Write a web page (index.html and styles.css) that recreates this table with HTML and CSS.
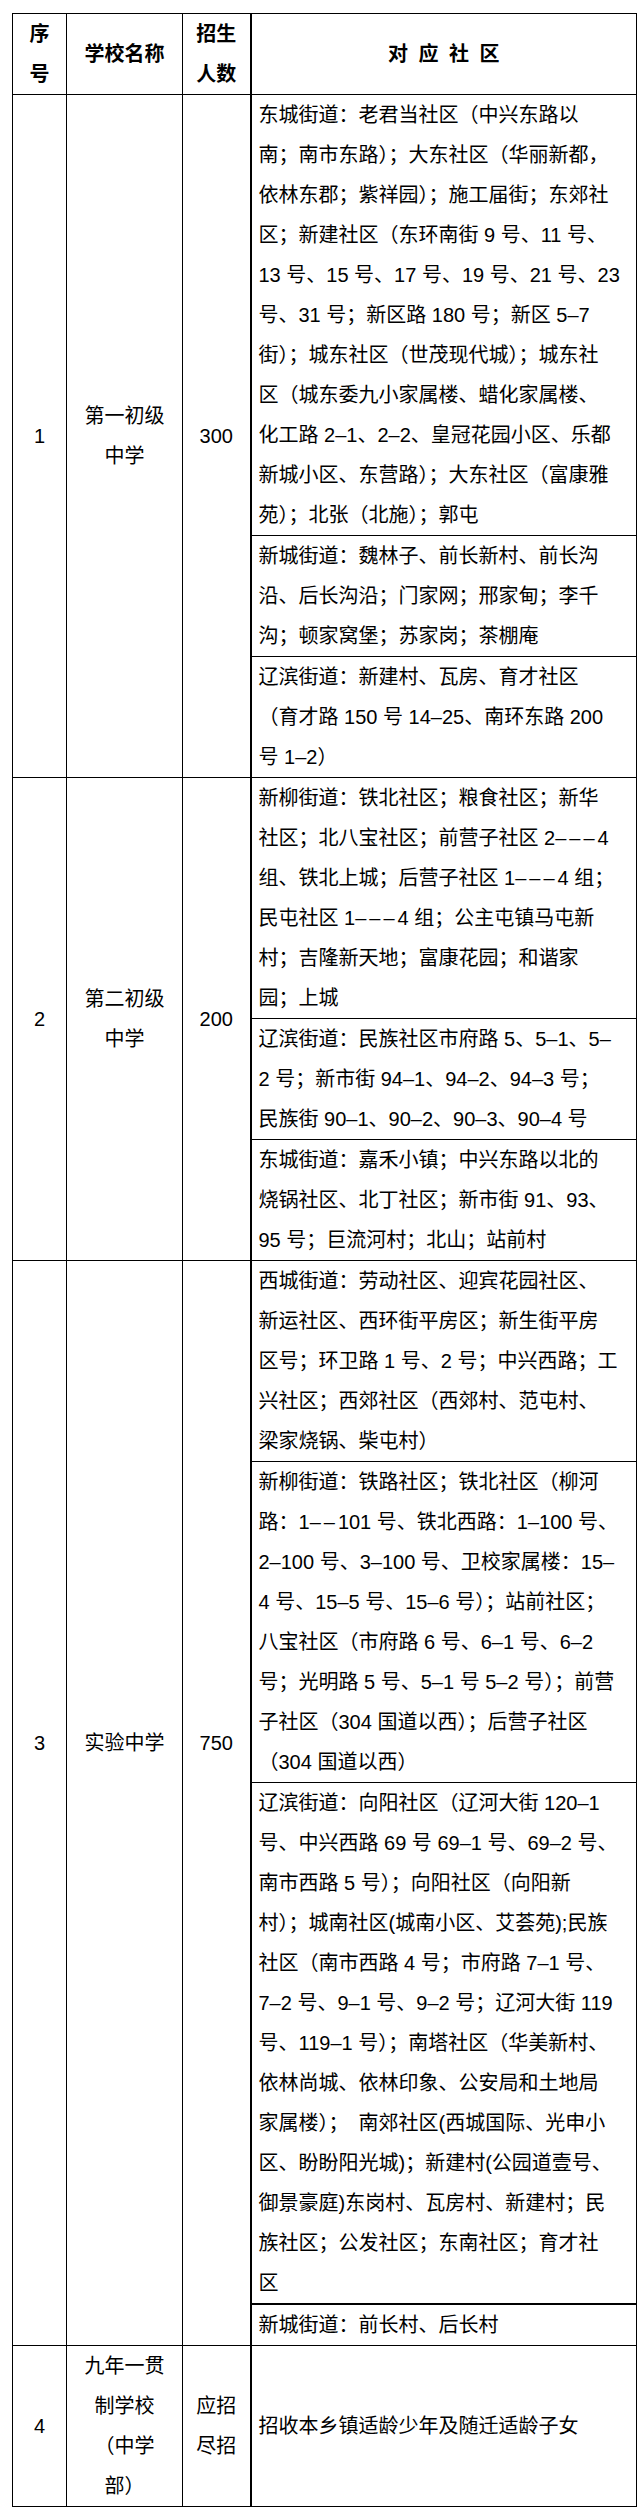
FILE: index.html
```html
<!DOCTYPE html>
<html lang="zh-CN">
<head>
<meta charset="utf-8">
<title>初中招生对应社区</title>
<link rel="stylesheet" href="styles.css">
</head>
<body>
<table class="roster">
  <colgroup>
    <col class="c-no">
    <col class="c-name">
    <col class="c-count">
    <col class="c-area">
  </colgroup>
  <thead>
    <tr>
      <th>序<br>号</th>
      <th>学校名称</th>
      <th>招生<br>人数</th>
      <th class="split spaced">对 应 社 区</th>
    </tr>
  </thead>
  <tbody>
    <tr>
      <td rowspan="3">1</td>
      <td rowspan="3">第一初级<br>中学</td>
      <td rowspan="3">300</td>
      <td class="split area">东城街道：老君当社区（中兴东路以<br>南；南市东路）；大东社区（华丽新都，<br>依林东郡；紫祥园）；施工届街；东郊社<br>区；新建社区（东环南街 9 号、11 号、<br>13 号、15 号、17 号、19 号、21 号、23<br>号、31 号；新区路 180 号；新区 5–7<br>街）；城东社区（世茂现代城）；城东社<br>区（城东委九小家属楼、蜡化家属楼、<br>化工路 2–1、2–2、皇冠花园小区、乐都<br>新城小区、东营路）；大东社区（富康雅<br>苑）；北张（北施）；郭屯</td>
    </tr>
    <tr>
      <td class="split area">新城街道：魏林子、前长新村、前长沟<br>沿、后长沟沿；门家网；邢家甸；李千<br>沟；顿家窝堡；苏家岗；茶棚庵</td>
    </tr>
    <tr>
      <td class="split area">辽滨街道：新建村、瓦房、育才社区<br>（育才路 150 号 14–25、南环东路 200<br>号 1–2）</td>
    </tr>
    <tr>
      <td rowspan="3">2</td>
      <td rowspan="3">第二初级<br>中学</td>
      <td rowspan="3">200</td>
      <td class="split area">新柳街道：铁北社区；粮食社区；新华<br>社区；北八宝社区；前营子社区 2<span class="dashes">–––</span>4<br>组、铁北上城；后营子社区 1<span class="dashes">–––</span>4 组；<br>民屯社区 1<span class="dashes">–––</span>4 组；公主屯镇马屯新<br>村；吉隆新天地；富康花园；和谐家<br>园；上城</td>
    </tr>
    <tr>
      <td class="split area">辽滨街道：民族社区市府路 5、5–1、5–<br>2 号；新市街 94–1、94–2、94–3 号；<br>民族街 90–1、90–2、90–3、90–4 号</td>
    </tr>
    <tr>
      <td class="split area">东城街道：嘉禾小镇；中兴东路以北的<br>烧锅社区、北丁社区；新市街 91、93、<br>95 号；巨流河村；北山；站前村</td>
    </tr>
    <tr>
      <td rowspan="4" class="lift">3</td>
      <td rowspan="4" class="lift">实验中学</td>
      <td rowspan="4" class="lift">750</td>
      <td class="split area">西城街道：劳动社区、迎宾花园社区、<br>新运社区、西环街平房区；新生街平房<br>区号；环卫路 1 号、2 号；中兴西路；工<br>兴社区；西郊社区（西郊村、范屯村、<br>梁家烧锅、柴屯村）</td>
    </tr>
    <tr>
      <td class="split area">新柳街道：铁路社区；铁北社区（柳河<br>路：1<span class="dashes">––</span>101 号、铁北西路：1–100 号、<br>2–100 号、3–100 号、卫校家属楼：15–<br>4 号、15–5 号、15–6 号）；站前社区；<br>八宝社区（市府路 6 号、6–1 号、6–2<br>号；光明路 5 号、5–1 号 5–2 号）；前营<br>子社区（304 国道以西）；后营子社区<br>（304 国道以西）</td>
    </tr>
    <tr>
      <td class="split area">辽滨街道：向阳社区（辽河大街 120–1<br>号、中兴西路 69 号 69–1 号、69–2 号、<br>南市西路 5 号）；向阳社区（向阳新<br>村）；城南社区(城南小区、艾荟苑);民族<br>社区（南市西路 4 号；市府路 7–1 号、<br>7–2 号、9–1 号、9–2 号；辽河大街 119<br>号、119–1 号）；南塔社区（华美新村、<br>依林尚城、依林印象、公安局和土地局<br>家属楼）；　南郊社区(西城国际、光申小<br>区、盼盼阳光城)；新建村(公园道壹号、<br>御景豪庭)东岗村、瓦房村、新建村；民<br>族社区；公发社区；东南社区；育才社<br>区</td>
    </tr>
    <tr>
      <td class="split area heavy-top">新城街道：前长村、后长村</td>
    </tr>
    <tr>
      <td>4</td>
      <td>九年一贯<br>制学校<br>（中学<br>部）</td>
      <td>应招<br>尽招</td>
      <td class="split area">招收本乡镇适龄少年及随迁适龄子女</td>
    </tr>
  </tbody>
</table>
</body>
</html>
```
FILE: styles.css
```css
html, body {
  margin: 0;
  padding: 0;
  background: #ffffff;
}

.roster {
  margin: 13px 0 0 12px;
  width: 624px;
  table-layout: fixed;
  border-collapse: collapse;
  font-family: "Liberation Sans", "Noto Sans CJK SC", sans-serif;
  font-size: 20px;
  line-height: 40px;
  color: #000000;
}

.c-no { width: 54px; }
.c-name { width: 116px; }
.c-count { width: 68px; }
.c-area { width: 386px; }

.roster th,
.roster td {
  border: 1px solid #000000;
  padding: 0;
  text-align: center;
  vertical-align: middle;
  white-space: nowrap;
  font-weight: 400;
}

.roster th {
  font-weight: 700;
}

.roster .split {
  border-left: 2px solid #000000;
}

.roster .spaced {
  word-spacing: 5px;
}

.roster .area {
  text-align: left;
  padding-left: 7px;
}

.roster .dashes {
  letter-spacing: 3px;
}

.roster .heavy-top {
  border-top: 2px solid #000000;
}

.roster .lift {
  padding-bottom: 120px;
}
```
